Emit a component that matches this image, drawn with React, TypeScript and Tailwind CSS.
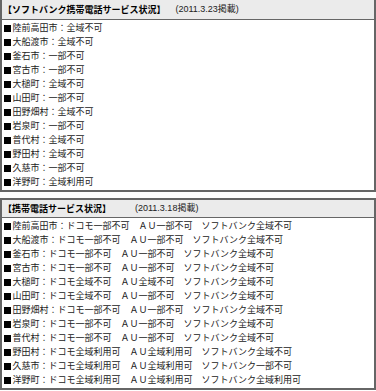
const softbank = [
  "陸前高田市：全域不可",
  "大船渡市：全域不可",
  "釜石市：一部不可",
  "宮古市：一部不可",
  "大槌町：全域不可",
  "山田町：一部不可",
  "田野畑村：全域不可",
  "岩泉町：一部不可",
  "普代村：全域不可",
  "野田村：全域不可",
  "久慈市：一部不可",
  "洋野町：全域利用可",
];

const carriers = [
  "陸前高田市：ドコモ一部不可　ＡＵ一部不可　ソフトバンク全域不可",
  "大船渡市：ドコモ一部不可　ＡＵ一部不可　ソフトバンク全域不可",
  "釜石市：ドコモ一部不可　ＡＵ一部不可　ソフトバンク全域不可",
  "宮古市：ドコモ一部不可　ＡＵ一部不可　ソフトバンク全域不可",
  "大槌町：ドコモ全域不可　ＡＵ全域不可　ソフトバンク全域不可",
  "山田町：ドコモ全域不可　ＡＵ一部不可　ソフトバンク全域不可",
  "田野畑村：ドコモ一部不可　ＡＵ一部不可　ソフトバンク全域不可",
  "岩泉町：ドコモ一部不可　ＡＵ一部不可　ソフトバンク全域不可",
  "普代村：ドコモ一部不可　ＡＵ一部不可　ソフトバンク全域不可",
  "野田村：ドコモ全域利用可　ＡＵ全域利用可　ソフトバンク全域不可",
  "久慈市：ドコモ全域利用可　ＡＵ全域利用可　ソフトバンク一部不可",
  "洋野町：ドコモ全域利用可　ＡＵ全域利用可　ソフトバンク全域利用可",
];

function Rows({ items }: { items: string[] }) {
  return (
    <ul className="py-[1px] pl-[2px]">
      {items.map((t) => (
        <li key={t} className="flex h-[14px] items-center whitespace-nowrap text-[9px] leading-[14px] text-[#222]">
          {/* bullet square */}
          <span className="mr-[1.5px] inline-block h-[7px] w-[7px] shrink-0 bg-black" />
          {t}
        </li>
      ))}
    </ul>
  );
}

export default function App() {
  return (
    <div className="w-[376px] bg-white font-['Noto_Sans_CJK_JP',sans-serif]">
      {/* softbank status, top edge scrolled off */}
      <section className="border-x-2 border-b-2 border-[#666]">
        <div className="flex h-[20px] items-center border-b border-[#666] bg-[#ebebeb] pl-[1px]">
          <span className="text-[9px] font-bold text-black">【ソフトバンク携帯電話サービス状況】</span>
          <span className="ml-[10px] font-['Liberation_Sans','Noto_Sans_CJK_JP',sans-serif] text-[9px] text-[#222]">
            (2011.3.23掲載)
          </span>
        </div>
        <Rows items={softbank} />
      </section>

      <section className="mt-[6px] border-2 border-[#666]">
        <div className="flex h-[18px] items-center border-b border-[#666] bg-[#ebebeb] pl-[1px]">
          <span className="text-[9px] font-bold text-black">【携帯電話サービス状況】</span>
          <span className="ml-[24px] font-['Liberation_Sans','Noto_Sans_CJK_JP',sans-serif] text-[9px] text-[#222]">
            (2011.3.18掲載)
          </span>
        </div>
        <Rows items={carriers} />
      </section>
    </div>
  );
}
